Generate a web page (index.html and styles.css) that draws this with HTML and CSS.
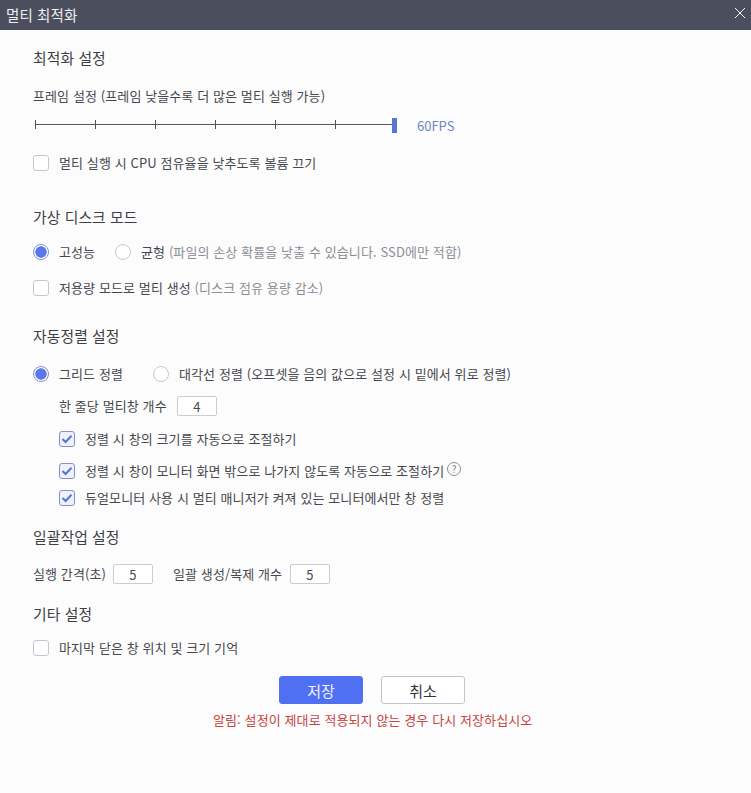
FILE: index.html
```html
<!DOCTYPE html>
<html lang="ko">
<head>
<meta charset="utf-8">
<title>멀티 최적화</title>
<link rel="stylesheet" href="styles.css">
</head>
<body>
<div class="window">
  <header class="titlebar">
    <span class="title">멀티 최적화</span>
    <svg class="close" width="12" height="12" viewBox="0 0 12 12"><path d="M1 1L11 11M11 1L1 11" stroke="#f4f4f8" stroke-width="1" fill="none"/></svg>
  </header>
  <main class="content">
    <h2 class="heading h-first">최적화 설정</h2>
    <div class="row r-frame">프레임 설정 (프레임 낮을수록 더 많은 멀티 실행 가능)</div>
    <div class="slider-row">
      <div class="slider">
        <i class="tick"></i><i class="tick"></i><i class="tick"></i><i class="tick"></i><i class="tick"></i><i class="tick"></i>
        <b class="thumb"></b>
      </div>
      <span class="fps">60FPS</span>
    </div>
    <label class="row r-mute"><span class="check"></span>멀티 실행 시 CPU 점유율을 낮추도록 볼륨 끄기</label>

    <h2 class="heading h-disk">가상 디스크 모드</h2>
    <div class="row r-disk">
      <span class="radio on"></span><span class="opt-a">고성능</span>
      <span class="radio"></span><span>균형 <span class="muted">(파일의 손상 확률을 낮출 수 있습니다. SSD에만 적합)</span></span>
    </div>
    <label class="row r-low"><span class="check"></span><span>저용량 모드로 멀티 생성 <span class="muted">(디스크 점유 용량 감소)</span></span></label>

    <h2 class="heading h-sort">자동정렬 설정</h2>
    <div class="row r-sort">
      <span class="radio on"></span><span class="opt-b">그리드 정렬</span>
      <span class="radio"></span><span>대각선 정렬 (오프셋을 음의 값으로 설정 시 밑에서 위로 정렬)</span>
    </div>
    <div class="row indent r-count"><span class="count-label">한 줄당 멀티창 개수</span><span class="field">4</span></div>
    <label class="row indent r-c1"><span class="check checked"><svg width="12" height="10" viewBox="0 0 12 10"><path d="M1.5 5L4.6 8L10.5 1.8" fill="none" stroke="#5673d6" stroke-width="2"/></svg></span>정렬 시 창의 크기를 자동으로 조절하기</label>
    <label class="row indent r-c2"><span class="check checked"><svg width="12" height="10" viewBox="0 0 12 10"><path d="M1.5 5L4.6 8L10.5 1.8" fill="none" stroke="#5673d6" stroke-width="2"/></svg></span>정렬 시 창이 모니터 화면 밖으로 나가지 않도록 자동으로 조절하기<span class="help">?</span></label>
    <label class="row indent r-c3"><span class="check checked"><svg width="12" height="10" viewBox="0 0 12 10"><path d="M1.5 5L4.6 8L10.5 1.8" fill="none" stroke="#5673d6" stroke-width="2"/></svg></span>듀얼모니터 사용 시 멀티 매니저가 켜져 있는 모니터에서만 창 정렬</label>

    <h2 class="heading h-batch">일괄작업 설정</h2>
    <div class="row r-batch">
      <span class="batch-a">실행 간격(초)</span><span class="field">5</span>
      <span class="batch-b">일괄 생성/복제 개수</span><span class="field">5</span>
    </div>

    <h2 class="heading h-etc">기타 설정</h2>
    <label class="row r-last"><span class="check"></span>마지막 닫은 창 위치 및 크기 기억</label>

    <div class="actions">
      <button class="btn primary" type="button">저장</button>
      <button class="btn" type="button">취소</button>
    </div>
    <p class="notice">알림: 설정이 제대로 적용되지 않는 경우 다시 저장하십시오</p>
  </main>
</div>
</body>
</html>
```
FILE: styles.css
```css
* { box-sizing: border-box; }
html, body { margin: 0; padding: 0; height: 100%; }
body {
  background: #fcfcfc;
  color: #45484f;
  font-family: "Noto Sans CJK KR", "Noto Sans", sans-serif;
  font-size: 13px;
  letter-spacing: .1px;
  overflow: hidden;
}
.window { width: 751px; height: 793px; display: flex; flex-direction: column; }
.titlebar {
  height: 30px;
  flex: none;
  background: #4a4e5d;
  display: flex;
  align-items: center;
  justify-content: space-between;
  padding: 0 5px 0 6px;
}
.title { color: #eef0f4; font-size: 14.5px; line-height: 26px; }
.close { display: block; margin-bottom: 4px; }
.content { padding: 0 0 0 33px; flex: 1; }
.heading {
  margin: 0;
  font-size: 14.8px;
  font-weight: 400;
  line-height: 20px;
  color: #3c3f46;
}
.row { display: flex; align-items: center; line-height: 20px; height: 20px; }
.indent { padding-left: 26px; }
.h-first { margin-top: 18px; }
.r-frame { margin-top: 18px; }
.slider-row { display: flex; margin-top: 12px; height: 20px; }
.slider {
  position: relative;
  margin-left: 2px;
  width: 362px;
  height: 15px;
  display: flex;
  align-items: flex-start;
  padding-top: 2px;
  background: linear-gradient(#55585f, #55585f) no-repeat 0 6px / 358px 1px;
}
.tick { display: block; width: 60px; flex: none; height: 9px; border-left: 1px solid #4e5158; }
.thumb { position: absolute; left: 357px; top: 0; width: 5px; height: 15px; background: #5674d8; }
.fps { margin: -2px 0 0 20px; height: 20px; line-height: 20px; color: #6f84c6; font-size: 13px; letter-spacing: 0; }
.check {
  flex: none;
  width: 16px;
  height: 16px;
  margin-right: 10px;
  border: 1px solid #c3c6cf;
  border-radius: 3px;
  background: #fff;
  display: flex;
  align-items: center;
  justify-content: center;
}
.check.checked { border-color: #7f90cc; background: #eef1fa; }
.r-mute { margin-top: 15px; }
.h-disk { margin-top: 34px; }
.r-disk { margin-top: 15px; }
.radio {
  flex: none;
  width: 16px;
  height: 16px;
  margin-right: 10px;
  border: 1px solid #c6c9d1;
  border-radius: 50%;
  background: #fff;
}
.radio.on { border-color: #7f90d8; background: radial-gradient(circle, #5a78ea 0 5.4px, #fff 6px); }
.opt-a { width: 56px; }
.muted { color: #8b8e96; }
.r-low { margin-top: 16px; }
.h-sort { margin-top: 28px; }
.r-sort { margin-top: 18px; }
.opt-b { width: 94px; }
.r-count { margin-top: 12px; }
.count-label { width: 118px; }
.field {
  display: block;
  flex: none;
  width: 40px;
  height: 20px;
  line-height: 19px;
  text-align: center;
  border: 1px solid #c9ccd3;
  border-radius: 2px;
  background: #fff;
}
.r-c1 { margin-top: 13px; }
.r-c2 { margin-top: 12px; }
.r-c3 { margin-top: 7px; }
.help {
  width: 14px;
  height: 14px;
  margin: -5px 0 0 3px;
  border: 1px solid #8d909a;
  border-radius: 50%;
  font-size: 10px;
  line-height: 12px;
  text-align: center;
  color: #777a84;
}
.h-batch { margin-top: 19px; }
.r-batch { margin-top: 17px; }
.batch-a { width: 80px; }
.batch-b { margin-left: 20px; width: 117px; }
.h-etc { margin-top: 20px; }
.r-last { margin-top: 14px; }
.actions { display: flex; gap: 18px; margin: 18px 0 0 246px; }
.btn {
  width: 84px;
  height: 28px;
  padding: 0;
  font: inherit;
  font-size: 15px;
  color: #33363d;
  background: #fff;
  border: 1px solid #c2c5ce;
  border-radius: 3px;
}
.btn.primary { background: #4f70f3; border-color: #4f70f3; color: #eef1fd; }
.notice { margin: 6px 0 0 180px; color: #c9433f; font-size: 13px; line-height: 20px; }
```
